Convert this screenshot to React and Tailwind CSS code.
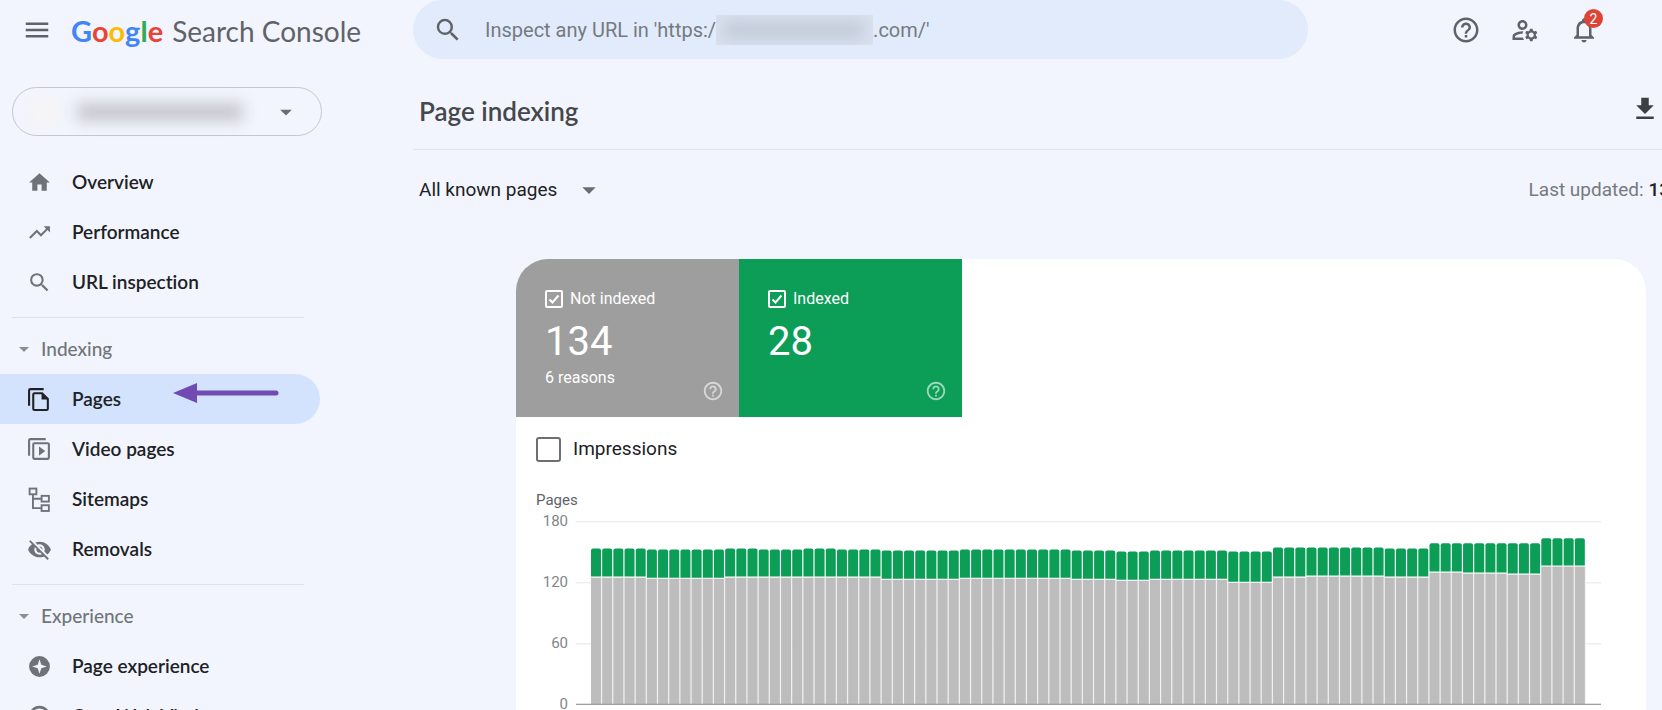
import React from 'react';
import {
  MdMenu,
  MdHome,
  MdTrendingUp,
  MdSearch,
  MdVisibilityOff,
  MdOutlineManageAccounts,
  MdNotificationsNone,
  MdHelpOutline,
  MdArrowDropDown,
  MdFileDownload,
} from 'react-icons/md';

function PagesIcon({ className }) {
  return (
    <svg viewBox="0 0 24 24" className={className} fill="none" stroke="currentColor" strokeWidth="2" aria-hidden="true">
      <path d="M2 18V3.200Q2 2 3.200 2H16" />
      <path d="M7.200 6H14.500L20 11.500V20.800Q20 22 18.800 22H7.200Q6 22 6 20.800V7.200Q6 6 7.200 6Z" />
      <path d="M14 6V12H20Z" fill="currentColor" stroke="none" />
    </svg>
  );
}

function VideoPagesIcon({ className }) {
  return (
    <svg viewBox="0 0 24 24" className={className} fill="none" stroke="currentColor" strokeWidth="2" aria-hidden="true">
      <path d="M2 18V3.200Q2 2 3.200 2H18" />
      <rect x="6" y="6" width="15" height="15" rx="1" />
      <path d="M11.500 9V18L17.500 13.500Z" fill="currentColor" stroke="none" />
    </svg>
  );
}

function SitemapsIcon({ className }) {
  return (
    <svg viewBox="0 0 24 24" className={className} fill="none" stroke="currentColor" strokeWidth="1.800" aria-hidden="true">
      <rect x="2.500" y="1.500" width="6.500" height="5.500" />
      <rect x="14" y="8.500" width="7" height="5.500" />
      <rect x="14" y="17.500" width="7" height="5.500" />
      <path d="M5.700 7V20.300H14M5.700 11.300H14" />
    </svg>
  );
}

function ExperienceIcon({ className }) {
  return (
    <svg viewBox="0 0 24 24" className={className} fill="currentColor" aria-hidden="true">
      <path
        fillRule="evenodd"
        d="M12 2a10 10 0 1 0 0 20a10 10 0 1 0 0-20ZM12 5L13.700 10.300L19 12L13.700 13.700L12 19L10.300 13.700L5 12L10.300 10.300Z"
      />
    </svg>
  );
}

function VitalsIcon({ className }) {
  return (
    <svg viewBox="0 0 24 24" className={className} fill="none" stroke="currentColor" strokeWidth="2.500" aria-hidden="true">
      <circle cx="12" cy="12" r="9" />
      <path d="M12 13L16 8" />
    </svg>
  );
}

function NavItem({ icon: Icon, label, active }) {
  return (
    <li>
      <a
        href="#"
        aria-current={active ? 'page' : undefined}
        className={
          'relative flex h-[50px] items-center gap-5 rounded-r-full pl-[27px] text-[19px] font-semibold text-[#202124] ' +
          (active ? 'bg-[#d3e3fd]' : '')
        }
      >
        <Icon className={'size-[25px] shrink-0 ' + (active ? 'text-[#202124]' : 'text-[#6f7378]')} />
        {label}
        {active && (
          <svg viewBox="0 0 106 22" className="absolute top-2 left-[173px] w-[106px] fill-[#724ab4]" aria-hidden="true">
            <path d="M0 11L24 1V21Z" />
            <path d="M22 8.500H103Q105.500 8.500 105.500 11T103 13.500H22Z" />
          </svg>
        )}
      </a>
    </li>
  );
}

function NavSection({ title, children }) {
  return (
    <section>
      <hr className="mt-2.5 mr-4 ml-3 border-[#dfe1e8]" />
      <button type="button" className="mt-1.5 flex h-[50px] w-full items-center gap-[5px] pl-3 text-[19px] font-medium text-[#70757a]">
        <MdArrowDropDown className="size-6 text-[#8b8f94]" />
        {title}
      </button>
      <ul>{children}</ul>
    </section>
  );
}

function StatTile({ id, label, value, note, className }) {
  return (
    <div className={'flex h-[158px] w-[223px] flex-col pt-7 pr-[15px] pl-[29px] text-white ' + className}>
      <label htmlFor={id} className="flex h-6 items-center gap-[7px] text-base">
        <span className="relative grid size-[18px]">
          <input id={id} type="checkbox" defaultChecked className="peer size-[18px] appearance-none rounded-xs border-2 border-white" />
          <svg viewBox="0 0 18 18" className="pointer-events-none absolute inset-0 hidden fill-none stroke-white stroke-2 peer-checked:block" aria-hidden="true">
            <path d="M4.500 9.500L7.500 12.500L13.500 5.500" />
          </svg>
        </span>
        {label}
      </label>
      <div className="mt-[9px] text-[40px] leading-[44px]">{value}</div>
      <div className="mt-0.5 flex h-9 items-start justify-between text-base">
        <span>{note}</span>
        <button type="button" aria-label={'About ' + label} className="self-end text-white/60">
          <MdHelpOutline className="size-[22px]" />
        </button>
      </div>
    </div>
  );
}

/* [days, total pages, not indexed pages] */
const runs = [
  [5, 154, 125],
  [7, 153, 124],
  [3, 154, 125],
  [4, 153, 125],
  [3, 154, 125],
  [4, 153, 125],
  [7, 152, 123],
  [10, 153, 124],
  [4, 152, 123],
  [3, 151, 122],
  [7, 152, 123],
  [4, 151, 120],
  [3, 155, 125],
  [7, 155, 126],
  [4, 154, 125],
  [3, 159, 130],
  [4, 159, 129],
  [3, 159, 128],
  [4, 164, 136],
];
const days = runs.flatMap(([n, total, rest]) => Array.from({ length: n }, () => [total, rest]));

const W = 1025;
const H = 184;
const LEFT = 15;
const PITCH = 11.18;
const y = (v) => H - (v * (H - 1)) / 180;

function Chart() {
  return (
    <div className="mt-[11px] flex">
      <div className="-my-2 flex h-[199px] w-8 flex-col justify-between text-right text-[15px] leading-4 text-[#80868b]">
        <span>180</span>
        <span>120</span>
        <span>60</span>
        <span>0</span>
      </div>
      <svg viewBox={`0 0 ${W} ${H}`} preserveAspectRatio="none" className="ml-2 h-[184px] min-w-0 flex-1" role="img" aria-label="Indexed and not indexed pages per day">
        {[60, 120, 180].map((v) => (
          <rect key={v} x="0" y={Math.round(y(v)) - 1} width={W} height="1.500" fill="#eeeeee" />
        ))}
        {days.map(([total, rest], i) => {
          const x = LEFT + i * PITCH;
          const w = PITCH - 1.2;
          const top = y(total);
          const mid = y(rest);
          return (
            <g key={i}>
              <rect x={x} y={top} width={PITCH} height={mid - top} fill="#ffffff" />
              <rect x={x} y={mid - 1} width={PITCH} height={H - mid + 1} fill="#f1f1f1" />
              <path
                d={`M${x} ${mid - 1.3}V${top + 2}q0 -2 2 -2H${x + w - 2}q2 0 2 2V${mid - 1.3}Z`}
                fill="#0c9d57"
              />
              <rect x={x} y={mid} width={w} height={H - mid} fill="#bdbdbd" />
            </g>
          );
        })}
        <rect x="0" y={H - 1.3} width={W} height="1.300" fill="#9e9e9e" />
      </svg>
    </div>
  );
}

export default function App() {
  return (
    <div className="flex h-screen flex-col overflow-hidden bg-[#f2f5fd] font-['Roboto',sans-serif] [font-variant-ligatures:none]">
      <header className="flex h-[59px] shrink-0 items-center">
        <div className="flex w-[413px] shrink-0 items-center gap-[19px] pl-[22px] font-['Lato',sans-serif]">
          <button type="button" aria-label="Main menu" className="text-[#5f6368]">
            <MdMenu className="size-[30px]" />
          </button>
          <a href="#" className="flex items-baseline gap-[9px] pt-0.5 text-[28px] leading-9 text-[#5f6368]">
            <span className="text-[29px] font-bold">
              <span className="text-[#4285f4]">G</span>
              <span className="text-[#ea4335]">o</span>
              <span className="text-[#fbbc05]">o</span>
              <span className="text-[#4285f4]">g</span>
              <span className="text-[#34a853]">l</span>
              <span className="text-[#ea4335]">e</span>
            </span>
            <span>Search Console</span>
          </a>
        </div>
        <div className="flex h-full w-[895px] items-center rounded-[30px] bg-[#e2ebfb] pl-5 text-xl text-[#757a80]">
          <MdSearch className="size-[30px] shrink-0 text-[#5f6368]" />
          <label htmlFor="inspect" className="ml-[22px] flex shrink-0 items-center whitespace-nowrap">
            Inspect any URL in 'https:/
            <span className="flex h-[30px] w-[157px] items-center overflow-hidden bg-[#d9e1ef]">
              <span className="ml-2 h-4 w-[140px] bg-[#bfc8d6] blur-[8px]" />
            </span>
            .com/'
          </label>
          <input id="inspect" type="text" className="h-full min-w-0 flex-1 bg-transparent px-3 outline-none" />
        </div>
        <div className="mr-[63px] ml-auto flex items-center gap-[29px] text-[#5f6368]">
          <button type="button" aria-label="Help">
            <MdHelpOutline className="size-[30px]" />
          </button>
          <button type="button" aria-label="User settings">
            <MdOutlineManageAccounts className="size-[30px]" />
          </button>
          <button type="button" aria-label="Notifications" className="relative">
            <MdNotificationsNone className="size-[30px]" />
            <span className="absolute -top-1.5 left-[15px] grid size-[19px] place-items-center rounded-full bg-[#db4437] text-sm text-white">
              2
            </span>
          </button>
        </div>
      </header>

      <div className="flex min-h-0 flex-1">
        <nav className="w-[320px] shrink-0 font-['Lato',sans-serif]">
          <button
            type="button"
            aria-label="Select property"
            className="mt-7 ml-3 flex h-[49px] w-[310px] items-center rounded-full border border-[#c6c7cb] pl-4"
          >
            <span className="size-8 rounded-full bg-[#f5f4f6] blur-[4px]" />
            <span className="ml-4 h-4 w-[166px] bg-[#bfc0c5] blur-[8px]" />
            <MdArrowDropDown className="ml-[29px] size-7 text-[#6a6e73]" />
          </button>
          <ul className="mt-[21px]">
            <NavItem icon={MdHome} label="Overview" />
            <NavItem icon={MdTrendingUp} label="Performance" />
            <NavItem icon={MdSearch} label="URL inspection" />
          </ul>
          <NavSection title="Indexing">
            <NavItem icon={PagesIcon} label="Pages" active />
            <NavItem icon={VideoPagesIcon} label="Video pages" />
            <NavItem icon={SitemapsIcon} label="Sitemaps" />
            <NavItem icon={MdVisibilityOff} label="Removals" />
          </NavSection>
          <NavSection title="Experience">
            <NavItem icon={ExperienceIcon} label="Page experience" />
            <NavItem icon={VitalsIcon} label="Core Web Vitals" />
          </NavSection>
        </nav>

        <main className="ml-[93px] min-w-0 flex-1 overflow-hidden">
          <div className="flex h-[91px] items-center justify-between border-b border-[#e1e3ea] pt-3.5 pl-1.5">
            <h1 className="font-['Lato',sans-serif] text-[26px] font-semibold text-[#45474a]">Page indexing</h1>
            <button type="button" aria-label="Export" className="mr-0.5 mb-1 text-[#3c4043]">
              <MdFileDownload className="size-[30px]" />
            </button>
          </div>
          <div className="flex h-20 items-center justify-between pl-1.5">
            <button type="button" className="flex items-center gap-4 text-[19px] text-[#202124]">
              All known pages
              <MdArrowDropDown className="size-8 text-[#6a6e73]" />
            </button>
            <p className="-mr-2 text-[19px] whitespace-nowrap text-[#757a80]">
              Last updated: <span className="font-medium text-[#202124]">13</span>
            </p>
          </div>
          <section className="mt-[29px] mr-4 ml-[103px] overflow-hidden rounded-t-[32px] bg-white">
            <div className="flex">
              <StatTile id="not-indexed" label="Not indexed" value="134" note="6 reasons" className="bg-[#9e9e9e]" />
              <StatTile id="indexed" label="Indexed" value="28" className="bg-[#0c9d57]" />
            </div>
            <div className="pr-[45px] pl-5 pb-10">
              <label htmlFor="impressions" className="mt-5 flex h-[25px] items-center gap-3 text-[19px] text-[#202124]">
                <input id="impressions" type="checkbox" className="size-[25px] appearance-none rounded-[3px] border-2 border-[#6f6f6f] bg-white checked:bg-[#6f6f6f]" />
                Impressions
              </label>
              <div className="mt-7 h-5 text-[15px] leading-5 text-[#5f6368]">Pages</div>
              <Chart />
            </div>
          </section>
        </main>
      </div>
    </div>
  );
}
